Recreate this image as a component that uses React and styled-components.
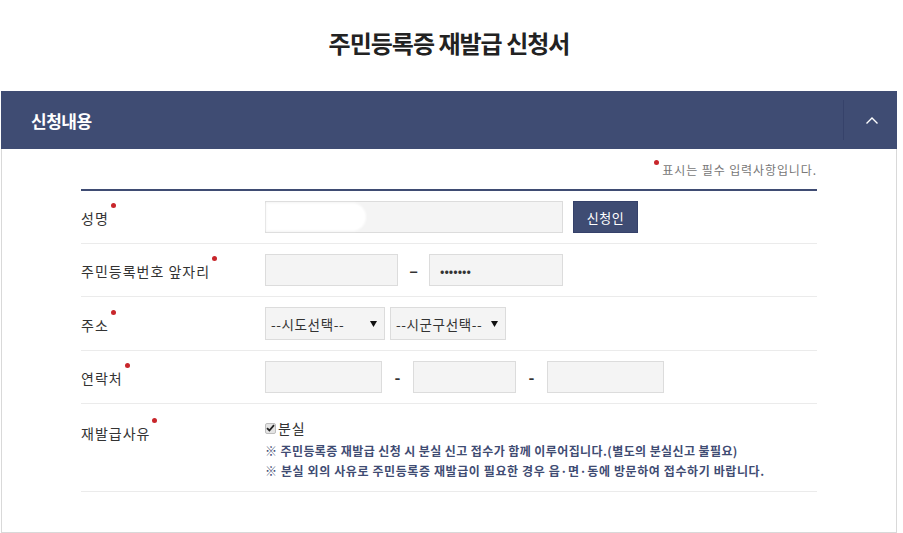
import React from "react";
import styled, { createGlobalStyle } from "styled-components";

const Global = createGlobalStyle`
  html, body { margin: 0; padding: 0; background: #fff; }
  body { font-family: "Noto Sans CJK KR", "Noto Sans", sans-serif; color: #333; width: 903px; }
  * { box-sizing: border-box; }
`;

const NAVY = "#3f4c73";

const Page = styled.div`
  width: 903px;
  padding: 0 6px 0 1px;
`;

const Title = styled.h1`
  margin: 0;
  height: 91px;
  padding-top: 27px;
  text-align: center;
  font-size: 24px;
  line-height: 32px;
  font-weight: 700;
  color: #222;
  letter-spacing: -1px;
`;

const Panel = styled.section`
  border: 1px solid #d9d9d9;
  border-top: none;
`;

const PanelHeader = styled.div`
  height: 58px;
  background: ${NAVY};
  display: flex;
  align-items: center;
  justify-content: space-between;
  margin: 0 -1px;
`;

const PanelTitle = styled.h2`
  margin: 0 0 0 30px;
  font-size: 17px;
  font-weight: 700;
  color: #fff;
  letter-spacing: -0.5px;
`;

const Toggle = styled.button`
  width: 54px;
  height: 40px;
  border: none;
  border-left: 1px solid #36426a;
  background: transparent;
  display: flex;
  align-items: center;
  justify-content: center;
  padding: 0 0 0 2px;
  cursor: pointer;
`;

const Body = styled.div`
  padding: 0 79px 40px 79px;
`;

const Notice = styled.p`
  margin: 0;
  height: 40px;
  padding-top: 12px;
  text-align: right;
  font-size: 12px;
  line-height: 18px;
  color: #777;
  letter-spacing: 0.9px;
`;

const Dot = styled.span`
  display: inline-block;
  width: 5px;
  height: 5px;
  border-radius: 50%;
  background: #c8262b;
  vertical-align: top;
  margin: -1px 3px 0 2px;
`;

const Table = styled.div`
  border-top: 2px solid ${NAVY};
`;

const Row = styled.div`
  display: flex;
  align-items: ${(p) => (p.$top ? "flex-start" : "center")};
  padding: ${(p) => (p.$top ? "14px 0 10px" : "10px 0")};
  border-bottom: 1px solid #ebebeb;
`;

const Label = styled.div`
  width: 184px;
  flex: none;
  font-size: 14px;
  line-height: 20px;
  color: #333;
  letter-spacing: 1px;
  padding-top: ${(p) => (p.$top ? "5px" : "2px")};
`;

const Req = styled.span`
  display: inline-block;
  width: 5px;
  height: 5px;
  border-radius: 50%;
  background: #c8262b;
  vertical-align: top;
  margin: -5px 0 0 2px;
`;

const Field = styled.div`
  display: flex;
  align-items: center;
  gap: ${(p) => p.$gap || 0}px;
`;

const InputWrap = styled.div`
  position: relative;
  width: ${(p) => p.$w}px;
  height: 32px;
`;

const TextInput = styled.input`
  width: 100%;
  height: 32px;
  border: 1px solid #dcdcdc;
  background: #f4f4f4;
  padding: 0 10px;
  font-family: inherit;
  font-size: 13px;
  color: #333;
  outline: none;
`;

const Redact = styled.span`
  position: absolute;
  left: 1px;
  top: 2px;
  width: 100px;
  height: 28px;
  background: #fff;
  border-radius: 0 14px 14px 0;
  filter: blur(1px);
`;

const Dash = styled.span`
  width: 31px;
  text-align: center;
  font-size: 16px;
  font-weight: 700;
  color: #333;
`;

const Button = styled.button`
  height: 32px;
  width: 65px;
  border: 1px solid #35416a;
  background: ${NAVY};
  color: #fff;
  font-family: inherit;
  font-size: 13px;
  letter-spacing: 0.5px;
  cursor: pointer;
`;

const SelectBox = styled.div`
  width: ${(p) => p.$w}px;
  height: 33px;
  border: 1px solid #dcdcdc;
  background: #f4f4f4;
  display: flex;
  align-items: center;
  justify-content: space-between;
  padding: 0 7px 0 5px;
  font-size: 13.5px;
  letter-spacing: 0.6px;
  color: #333;
`;

const Stack = styled.div`
  display: flex;
  flex-direction: column;
`;

const CheckLine = styled.label`
  display: flex;
  align-items: center;
  height: 22px;
  font-size: 14px;
  letter-spacing: 0.8px;
  color: #333;
  margin-top: -1px;
`;

const Box = styled.span`
  width: 11px;
  height: 11px;
  border: 1px solid #bdbdbd;
  border-radius: 2px;
  background: #e4e4e4;
  display: flex;
  align-items: center;
  justify-content: center;
  margin-right: 2px;
`;

const Notes = styled.div`
  margin-top: 2px;
`;

const Note = styled.p`
  margin: 0;
  font-size: 12px;
  line-height: 20px;
  font-weight: 700;
  color: #3f4c73;
  letter-spacing: ${(p) => p.$ls || "0.4px"};
  white-space: nowrap;
`;

const Triangle = () => (
  <svg width="7" height="6" viewBox="0 0 7 6">
    <path d="M0 0 H7 L3.5 6 Z" fill="#111" />
  </svg>
);

export default function App() {
  return (
    <Page>
      <Global />
      <Title>주민등록증 재발급 신청서</Title>
      <Panel>
        <PanelHeader>
          <PanelTitle>신청내용</PanelTitle>
          <Toggle aria-label="접기">
            <svg width="14" height="9" viewBox="0 0 14 9">
              <path d="M1.5 7.5 L7 2 L12.5 7.5" fill="none" stroke="#fff" strokeWidth="1.4" />
            </svg>
          </Toggle>
        </PanelHeader>
        <Body>
          <Notice>
            <Dot />표시는 필수 입력사항입니다.
          </Notice>
          <Table>
            <Row>
              <Label>성명<Req /></Label>
              <Field $gap={10}>
                <InputWrap $w={298}>
                  <TextInput />
                  <Redact />
                </InputWrap>
                <Button>신청인</Button>
              </Field>
            </Row>
            <Row>
              <Label>주민등록번호 앞자리<Req /></Label>
              <Field>
                <InputWrap $w={133}><TextInput /></InputWrap>
                <Dash>–</Dash>
                <InputWrap $w={134}><TextInput type="password" defaultValue="1234567" /></InputWrap>
              </Field>
            </Row>
            <Row>
              <Label>주소<Req /></Label>
              <Field $gap={5}>
                <SelectBox $w={120}>--시도선택--<Triangle /></SelectBox>
                <SelectBox $w={116}>--시군구선택--<Triangle /></SelectBox>
              </Field>
            </Row>
            <Row>
              <Label>연락처<Req /></Label>
              <Field>
                <InputWrap $w={117}><TextInput /></InputWrap>
                <Dash>-</Dash>
                <InputWrap $w={103}><TextInput /></InputWrap>
                <Dash>-</Dash>
                <InputWrap $w={117}><TextInput /></InputWrap>
              </Field>
            </Row>
            <Row $top>
              <Label $top>재발급사유<Req /></Label>
              <Stack>
                <CheckLine>
                  <Box>
                    <svg width="9" height="8" viewBox="0 0 9 8">
                      <path d="M1 4.2 L3.4 6.5 L8 1.2" fill="none" stroke="#222" strokeWidth="1.8" />
                    </svg>
                  </Box>
                  분실
                </CheckLine>
                <Notes>
                  <Note>※ 주민등록증 재발급 신청 시 분실 신고 접수가 함께 이루어집니다.(별도의 분실신고 불필요)</Note>
                  <Note $ls="0.6px">※ 분실 외의 사유로 주민등록증 재발급이 필요한 경우 읍·면·동에 방문하여 접수하기 바랍니다.</Note>
                </Notes>
              </Stack>
            </Row>
          </Table>
        </Body>
      </Panel>
    </Page>
  );
}
